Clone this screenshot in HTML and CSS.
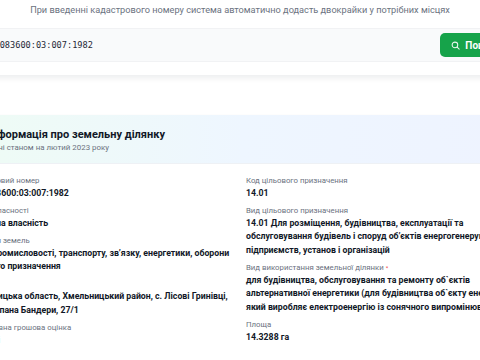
FILE: index.html
```html
<!DOCTYPE html>
<html lang="uk">
<head>
<meta charset="utf-8">
<title>Інформація про земельну ділянку</title>
<link rel="stylesheet" href="styles.css">
</head>
<body>
<div class="page">
  <section class="search-card">
    <p class="hint">При введенні кадастрового номеру система автоматично додасть двокрайки у потрібних місцях</p>
    <div class="search-box">
      <span class="search-value">6825083600:03:007:1982</span>
      <button class="search-btn" type="button">
        <svg class="search-icon" viewBox="0 0 16 16" width="9" height="9" aria-hidden="true"><circle cx="7" cy="7" r="5" fill="none" stroke="currentColor" stroke-width="1.8"/><path d="M11 11l3.5 3.5" stroke="currentColor" stroke-width="1.8" stroke-linecap="round"/></svg>
        <span>Пошук</span>
      </button>
    </div>
  </section>

  <section class="info-card">
    <header class="info-head">
      <svg class="head-icon" viewBox="0 0 16 16" width="16" height="16" aria-hidden="true"><path d="M8 1.5c-2.6 0-4.6 2-4.6 4.6 0 3.4 4.6 8.4 4.6 8.4s4.6-5 4.6-8.4C12.6 3.5 10.6 1.5 8 1.5z" fill="none" stroke="#16a34a" stroke-width="1.5"/><circle cx="8" cy="6.2" r="1.7" fill="#16a34a"/></svg>
      <div>
        <h2 class="info-title">Інформація про земельну ділянку</h2>
        <p class="info-sub">Дані станом на лютий 2023 року</p>
      </div>
    </header>
    <div class="info-body">
      <div class="col">
        <div class="field"><div class="label">Кадастровий номер</div><div class="value">6825083600:03:007:1982</div></div>
        <div class="field"><div class="label">Форма власності</div><div class="value">Приватна власність</div></div>
        <div class="field"><div class="label">Категорія земель</div><div class="value">Землі промисловості, транспорту, зв’язку, енергетики, оборони та іншого призначення</div></div>
        <div class="field"><div class="label">Адреса</div><div class="value">Хмельницька область, Хмельницький район, с. Лісові Гринівці, вул. Степана Бандери, 27/1</div></div>
        <div class="field"><div class="label">Нормативна грошова оцінка</div><div class="value">Відсутні</div></div>
      </div>
      <div class="col">
        <div class="field"><div class="label">Код цільового призначення</div><div class="value">14.01</div></div>
        <div class="field"><div class="label">Вид цільового призначення</div><div class="value">14.01 Для розміщення, будівництва, експлуатації та обслуговування будівель і споруд об’єктів енергогенеруючих підприємств, установ і організацій</div></div>
        <div class="field"><div class="label">Вид використання земельної ділянки <span class="req">*</span></div><div class="value">для будівництва, обслуговування та ремонту об`єктів альтернативної енергетики (для будівництва об`єкту енергетики, який виробляє електроенергію із сонячного випромінювання)</div></div>
        <div class="field"><div class="label">Площа</div><div class="value">14.3288 га</div></div>
      </div>
    </div>
  </section>
</div>
</body>
</html>
```

FILE: styles.css
```css
* { box-sizing: border-box; }

body {
  margin: 0;
  background: #ffffff;
  font-family: Roboto, "Noto Sans", sans-serif;
  color: #111827;
  overflow: hidden;
}

.page {
  width: 576px;
  margin-left: -46px;
  display: flex;
  flex-direction: column;
  gap: 40px;
}

.search-card {
  margin-right: 4px;
  background: #ffffff;
  border-radius: 0 0 10px 10px;
  box-shadow: 0 3px 6px rgba(15, 23, 42, 0.08);
  padding: 4px 12px 13px;
}

.hint {
  margin: 0 0 12px;
  font-size: 9.2px;
  line-height: 12px;
  color: #6b7280;
  text-align: center;
}

.search-box {
  height: 34px;
  display: flex;
  align-items: center;
  padding: 0 5px 0 12px;
  background: #f9fafb;
  border: 1px solid #f1f2f4;
  border-radius: 8px;
}

.search-value {
  font-family: "DejaVu Sans Mono", "Liberation Mono", monospace;
  font-size: 8.6px;
  color: #1f2937;
}

.search-btn {
  margin-left: auto;
  height: 24px;
  display: flex;
  align-items: center;
  gap: 5px;
  padding: 0 11px;
  border: 0;
  border-radius: 5px;
  background: #16a34a;
  color: #ffffff;
  font-family: Roboto, sans-serif;
  font-weight: 700;
  font-size: 10px;
}

.search-icon { opacity: 0.9; }

.info-card {
  background: #ffffff;
  border-radius: 10px;
  box-shadow: 0 1px 3px rgba(15, 23, 42, 0.06);
  overflow: hidden;
}

.info-head {
  height: 49px;
  display: flex;
  align-items: center;
  gap: 6px;
  padding: 2px 12px 0;
  background: linear-gradient(90deg, #eefcf4 0%, #eef6ff 50%, #eef3ff 100%);
  border-bottom: 1px solid #eef1f5;
}

.info-title {
  margin: 0;
  font-size: 11px;
  line-height: 14px;
  font-weight: 700;
  color: #111827;
}

.info-sub {
  margin: 0;
  font-size: 7.9px;
  line-height: 11px;
  color: #6b7280;
}

.info-body {
  display: grid;
  grid-template-columns: 266px 1fr;
  gap: 14px;
  padding: 12px 12px 12px;
}

.col {
  display: flex;
  flex-direction: column;
  gap: 6px;
}

.label {
  font-size: 7.8px;
  line-height: 10.5px;
  color: #6b7280;
}

.req {
  color: #ef4444;
  font-size: 6px;
  vertical-align: top;
}

.value {
  font-size: 8.75px;
  line-height: 13.5px;
  font-weight: 700;
  color: #111827;
}
```
